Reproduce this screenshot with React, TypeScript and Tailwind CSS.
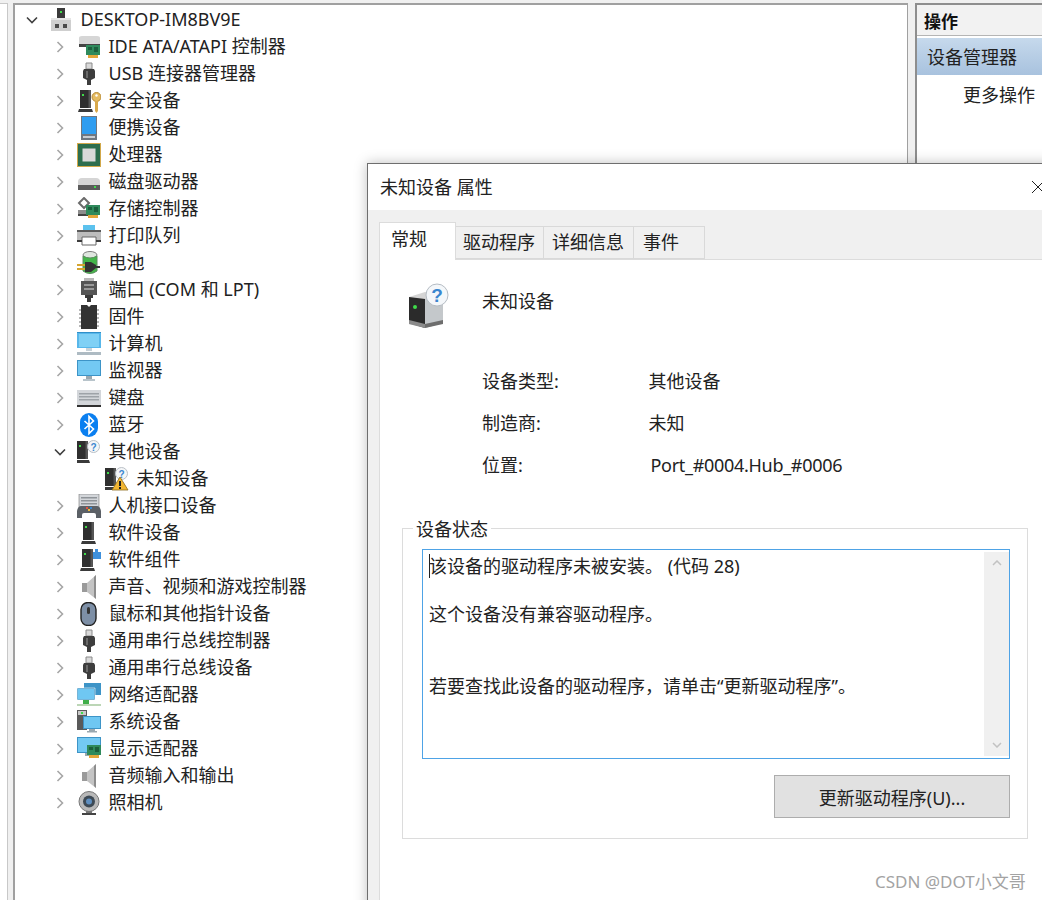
import React from "react";

const Led = ({ x, y }: { x: number; y: number }) => <rect x={x} y={y} width="2" height="2" fill="#3fdc4a" />;

const Tower = ({ x = 0 }: { x?: number }) => (
  <g transform={`translate(${x} 0)`}>
    <path d="M3 1h11v18H3z" fill="#2f2f2f" />
    <path d="M11.500 1H14v18h-2.500z" fill="#555" />
    <path d="M2 20h13l1 3H1z" fill="#3a3a3a" />
    <Led x={5} y={5} />
  </g>
);

const Bubble = () => (
  <g>
    <circle cx="16.500" cy="6.500" r="6" fill="#f4f6f8" stroke="#b9bfc6" />
    <text x="16.500" y="10.500" textAnchor="middle" fontSize="10" fontWeight="700" fill="#3a86cf" fontFamily="Liberation Sans, sans-serif">?</text>
  </g>
);

const Usb = () => (
  <svg viewBox="0 0 24 24" className="w-6 h-6">
    <path d="M9 1h6v6H9z" fill="#d9d9d9" stroke="#8a8a8a" />
    <path d="M7 7h10l1 2v7l-4 2v5h-4v-5l-4-2V9z" fill="#3d3d3d" />
    <path d="M9 9h2v7H9z" fill="#6a6a6a" />
  </svg>
);

const Speaker = () => (
  <svg viewBox="0 0 24 24" className="w-6 h-6">
    <path d="M5 8h5v9H5z" fill="#9a9a9a" />
    <path d="M10 8l9-8v24l-9-7z" fill="#c4c4c4" />
    <path d="M17 2l2-2v24l-2-2z" fill="#8d8d8d" />
  </svg>
);

const Card = ({ x = 0, y = 0 }: { x?: number; y?: number }) => (
  <g transform={`translate(${x} ${y})`}>
    <path d="M0 0h14v10H0z" fill="#2f8a5c" />
    <path d="M2 2h4v3H2zM8 2h4v5H8z" fill="#1c5f3d" />
    <path d="M2 10h10v3H2z" fill="#e3a63a" />
  </g>
);

const icons: Record<string, React.ReactNode> = {
  root: (
    <svg viewBox="0 0 24 24" className="w-6 h-6">
      <path d="M8 0h8v10H8z" fill="#3a3a3a" />
      <Led x={11} y={3} />
      <path d="M2 10h20v13H2z" fill="#cfcfcf" />
      <path d="M2 10h20v2H2z" fill="#e6e6e6" />
      <path d="M6 16h4v4H6zM14 16h4v4h-4z" fill="#4a4a4a" />
    </svg>
  ),
  ide: (
    <svg viewBox="0 0 24 24" className="w-6 h-6">
      <path d="M2 3q0-2 3-2h15q3 0 3 2v6H2z" fill="#d6d6d6" />
      <path d="M2 9h21v3H2z" fill="#444" />
      <Card x={9} y={10} />
    </svg>
  ),
  usb: <Usb />,
  security: (
    <svg viewBox="0 0 24 24" className="w-6 h-6">
      <Tower />
      <circle cx="19.500" cy="8" r="4.500" fill="#e4bb62" stroke="#b98b35" />
      <path d="M18 12h3v10l-1.500 2-1.500-2z" fill="#d9a94b" />
      <circle cx="19.500" cy="6.500" r="1.200" fill="#fff" />
    </svg>
  ),
  portable: (
    <svg viewBox="0 0 24 24" className="w-6 h-6">
      <path d="M4 0h16v24H4z" fill="#6f7780" />
      <path d="M5 1h14v17H5z" fill="#2f9df0" />
      <path d="M6 20h12v2H6z" fill="#c7ccd1" />
    </svg>
  ),
  cpu: (
    <svg viewBox="0 0 24 24" className="w-6 h-6">
      <path d="M0 0h24v24H0z" fill="#d1a84a" />
      <path d="M1 1h22v22H1z" fill="#2d6e4e" />
      <path d="M5.500 5.500h13v13h-13z" fill="#dadada" />
    </svg>
  ),
  disk: (
    <svg viewBox="0 0 24 24" className="w-6 h-6">
      <path d="M1 12q0-4 4-4h14q4 0 4 4v3H1z" fill="#d5d5d5" />
      <path d="M1 15h22v5H1z" fill="#5b5b5b" />
      <Led x={17} y={16} />
    </svg>
  ),
  storage: (
    <svg viewBox="0 0 24 24" className="w-6 h-6">
      <path d="M7 1l5 5-5 5-5-5z" fill="none" stroke="#6b6b6b" strokeWidth="2" />
      <path d="M1 13h15v5H1z" fill="#8d8d8d" />
      <path d="M1 17h18v2H1z" fill="#444" />
      <Card x={9} y={8} />
    </svg>
  ),
  printer: (
    <svg viewBox="0 0 24 24" className="w-6 h-6">
      <path d="M6 1h12v6H6z" fill="#5cc2ee" />
      <path d="M0 6h24v12H0z" fill="#bdbdbd" />
      <path d="M0 6h24v2H0z" fill="#5a5a5a" />
      <path d="M5 13h14v8H5z" fill="#fff" stroke="#666" />
      <path d="M0 16h5v2H0zM19 16h5v2h-5z" fill="#3d3d3d" />
    </svg>
  ),
  battery: (
    <svg viewBox="0 0 24 24" className="w-6 h-6">
      <ellipse cx="13" cy="4" rx="7" ry="3.500" fill="#dfe6df" stroke="#7c7c7c" />
      <path d="M6 5q7 4 14 0v15q-7 5-14 0z" fill="#43b649" stroke="#5c8c5f" />
      <path d="M0 13h9v2H0zM0 17h9v2H0z" fill="#d5a531" />
      <path d="M8 11h6l5 3v3l-5 4H8z" fill="#333" />
      <path d="M18 15h5v2h-5z" fill="#333" />
    </svg>
  ),
  port: (
    <svg viewBox="0 0 24 24" className="w-6 h-6">
      <path d="M4 3h16v14H4z" fill="#555" />
      <path d="M7 0h10v3H7z" fill="#b8b8b8" />
      <path d="M7 6h10v2H7zM7 10h10v2H7z" fill="#999" />
      <path d="M8 17h8v3h-2v4h-4v-4H8z" fill="#3a3a3a" />
    </svg>
  ),
  firmware: (
    <svg viewBox="0 0 24 24" className="w-6 h-6">
      <path d="M2 4h20v2H2zM2 8h20v2H2zM2 12h20v2H2zM2 16h20v2H2zM2 20h20v2H2z" fill="#b8b8b8" />
      <path d="M4 0h6l2 2 2-2h6v24H4z" fill="#333" />
    </svg>
  ),
  computer: (
    <svg viewBox="0 0 24 24" className="w-6 h-6">
      <path d="M0 0h24v16H0z" fill="#58b7ea" />
      <path d="M0 0h24v1H0z" fill="#2f8fc9" />
      <path d="M2 2h20v13H2z" fill="#7fd0f5" />
      <path d="M9 16h6v3H9z" fill="#c8d2d8" />
      <path d="M0 20h24v3H0z" fill="#aebbc3" />
    </svg>
  ),
  monitor: (
    <svg viewBox="0 0 24 24" className="w-6 h-6">
      <path d="M0 1h24v16H0z" fill="#3d94c7" />
      <path d="M1 2h22v14H1z" fill="#73c9f3" />
      <path d="M9 17h6v3H9z" fill="#9aa8b0" />
      <path d="M6 20h12v2H6z" fill="#b8c4cb" />
    </svg>
  ),
  keyboard: (
    <svg viewBox="0 0 24 24" className="w-6 h-6">
      <path d="M0 4h24v16H0z" fill="#d3d6da" />
      <path d="M2 7h20v1.500H2zM2 10h20v1.500H2zM2 13h20v1.500H2z" fill="#9ea3a8" />
      <path d="M0 19h24v2H0z" fill="#303030" />
    </svg>
  ),
  bluetooth: (
    <svg viewBox="0 0 24 24" className="w-6 h-6">
      <rect x="3" y="0" width="18" height="24" rx="9" fill="#0a7ff0" />
      <path d="M7.500 8l9 8-4.500 4.500v-17L16.500 8l-9 8" fill="none" stroke="#fff" strokeWidth="1.600" />
    </svg>
  ),
  other: (
    <svg viewBox="0 0 24 24" className="w-6 h-6">
      <Tower x={-3} />
      <Bubble />
    </svg>
  ),
  unknown: (
    <svg viewBox="0 0 24 24" className="w-6 h-6">
      <Tower x={-3} />
      <Bubble />
      <path d="M15 10l8 13H7z" fill="#f2b632" stroke="#8a6a1c" strokeWidth=".8" />
      <path d="M14 14h2v5h-2zM14 20h2v2h-2z" fill="#222" />
    </svg>
  ),
  hid: (
    <svg viewBox="0 0 24 24" className="w-6 h-6">
      <path d="M2 0h20v14H2z" fill="#d3d6da" stroke="#777" strokeWidth=".6" />
      <path d="M4 3h16v1.500H4zM4 6h16v1.500H4zM4 9h16v1.500H4z" fill="#8f9499" />
      <path d="M4 12h16q3 0 4 5v7h-5v-3q0-2-2-2H7q-2 0-2 2v3H0v-7q1-5 4-5z" fill="#5b6066" />
      <path d="M9 13h2v2H9z" fill="#e4533f" />
      <path d="M13 13h2v2h-2z" fill="#3a86cf" />
      <path d="M11 15h2v2h-2z" fill="#edbb3a" />
    </svg>
  ),
  softdev: (
    <svg viewBox="0 0 24 24" className="w-6 h-6">
      <Tower x={3} />
    </svg>
  ),
  softcomp: (
    <svg viewBox="0 0 24 24" className="w-6 h-6">
      <Tower x={2} />
      <path d="M16 4h2V1h3v3h3v7h-8z" fill="#3e90dc" />
    </svg>
  ),
  sound: <Speaker />,
  mouse: (
    <svg viewBox="0 0 24 24" className="w-6 h-6">
      <rect x="4" y="0.500" width="15" height="23" rx="7" fill="#7d8fa6" stroke="#222" strokeWidth="1.400" />
      <rect x="10" y="5" width="3" height="7" rx="1.500" fill="#333" />
    </svg>
  ),
  network: (
    <svg viewBox="0 0 24 24" className="w-6 h-6">
      <path d="M7 0h17v12H7z" fill="#3d94c7" />
      <path d="M0 5h18v12H0z" fill="#3d94c7" stroke="#fff" strokeWidth=".6" />
      <path d="M1 6h16v10H1z" fill="#6fc7f2" />
      <path d="M6 17h6v4H6z" fill="#3fae48" />
      <path d="M0 21h24v2H0z" fill="#bcd6b6" />
    </svg>
  ),
  system: (
    <svg viewBox="0 0 24 24" className="w-6 h-6">
      <path d="M0 0h10v20H0z" fill="#5a5a5a" />
      <path d="M1 1h8v4H1z" fill="#c9c9c9" />
      <Led x={4} y={2} />
      <path d="M6 6h18v13H6z" fill="#3d94c7" />
      <path d="M7 7h16v11H7z" fill="#6fc7f2" />
      <path d="M12 19h6v2h-6zM10 21h10v1.500H10z" fill="#9aa8b0" />
    </svg>
  ),
  display: (
    <svg viewBox="0 0 24 24" className="w-6 h-6">
      <path d="M0 0h24v16H0z" fill="#3d94c7" />
      <path d="M1 1h22v14H1z" fill="#73c9f3" />
      <path d="M8 16h6v3H8z" fill="#9aa8b0" />
      <Card x={10} y={8} />
    </svg>
  ),
  camera: (
    <svg viewBox="0 0 24 24" className="w-6 h-6">
      <circle cx="12" cy="10.500" r="10" fill="#b9b9b9" stroke="#777" />
      <circle cx="12" cy="10.500" r="6" fill="#3e4a55" />
      <circle cx="12" cy="10.500" r="3" fill="#5f8fc0" />
      <path d="M9 20h6v2H9z" fill="#777" />
      <path d="M5 22h14v2H5z" fill="#444" />
    </svg>
  ),
};

type Row = { label: string; icon: string; depth: number; open?: boolean; leaf?: boolean };

const rows: Row[] = [
  { label: "DESKTOP-IM8BV9E", icon: "root", depth: 0, open: true },
  { label: "IDE ATA/ATAPI 控制器", icon: "ide", depth: 1 },
  { label: "USB 连接器管理器", icon: "usb", depth: 1 },
  { label: "安全设备", icon: "security", depth: 1 },
  { label: "便携设备", icon: "portable", depth: 1 },
  { label: "处理器", icon: "cpu", depth: 1 },
  { label: "磁盘驱动器", icon: "disk", depth: 1 },
  { label: "存储控制器", icon: "storage", depth: 1 },
  { label: "打印队列", icon: "printer", depth: 1 },
  { label: "电池", icon: "battery", depth: 1 },
  { label: "端口 (COM 和 LPT)", icon: "port", depth: 1 },
  { label: "固件", icon: "firmware", depth: 1 },
  { label: "计算机", icon: "computer", depth: 1 },
  { label: "监视器", icon: "monitor", depth: 1 },
  { label: "键盘", icon: "keyboard", depth: 1 },
  { label: "蓝牙", icon: "bluetooth", depth: 1 },
  { label: "其他设备", icon: "other", depth: 1, open: true },
  { label: "未知设备", icon: "unknown", depth: 2, leaf: true },
  { label: "人机接口设备", icon: "hid", depth: 1 },
  { label: "软件设备", icon: "softdev", depth: 1 },
  { label: "软件组件", icon: "softcomp", depth: 1 },
  { label: "声音、视频和游戏控制器", icon: "sound", depth: 1 },
  { label: "鼠标和其他指针设备", icon: "mouse", depth: 1 },
  { label: "通用串行总线控制器", icon: "usb", depth: 1 },
  { label: "通用串行总线设备", icon: "usb", depth: 1 },
  { label: "网络适配器", icon: "network", depth: 1 },
  { label: "系统设备", icon: "system", depth: 1 },
  { label: "显示适配器", icon: "display", depth: 1 },
  { label: "音频输入和输出", icon: "sound", depth: 1 },
  { label: "照相机", icon: "camera", depth: 1 },
];

const depthPad = ["pl-[10px]", "pl-[38px]", "pl-[66px]"];

const Chevron = ({ open }: { open?: boolean }) => (
  <svg viewBox="0 0 14 14" className="w-[14px] h-[14px]">
    {open ? (
      <path d="M2 4.500l5 5 5-5" fill="none" stroke="#404040" strokeWidth="1.600" />
    ) : (
      <path d="M4.500 2l5 5-5 5" fill="none" stroke="#a6a6a6" strokeWidth="1.600" />
    )}
  </svg>
);

const TreeRow = ({ row }: { row: Row }) => (
  <div className={`flex items-center h-[27px] ${depthPad[row.depth]}`}>
    <div className="w-[14px] h-[14px] shrink-0">{!row.leaf && <Chevron open={row.open} />}</div>
    <div className="ml-[10px] w-6 h-6 shrink-0">{icons[row.icon]}</div>
    <span className="ml-[7.5px] text-[18px] leading-[27px] text-[#222] whitespace-nowrap">{row.label}</span>
  </div>
);

const Info = ({ label, value, valueClass }: { label: string; value: string; valueClass: string }) => (
  <div className="flex items-center h-[42px]">
    <span className="w-[166.500px]">{label}</span>
    <span className={valueClass}>{value}</span>
  </div>
);

const Tab = ({ label, className }: { label: string; className: string }) => (
  <div className={`flex items-center h-[33px] bg-[#f0f0f0] border border-[#d9d9d9] border-l-0 ${className}`}>{label}</div>
);

export default function App() {
  return (
    <div className="relative flex w-full h-[900px] overflow-hidden bg-[#f0f0f0] [font-family:'Noto_Sans','Noto_Sans_CJK_SC',sans-serif]">
      <div className="w-[8px] shrink-0 mt-[3px] bg-white border-t border-r border-[#c8c8c8]" />
      <div className="w-[5px] shrink-0" />
      <div className="w-[895px] shrink-0 mt-[3px] border-l-2 border-t-2 border-r border-[#a0a0a0] bg-white">
        <div className="pt-[1px]">
          {rows.map((r) => (
            <TreeRow key={r.label + r.depth + r.icon} row={r} />
          ))}
        </div>
      </div>
      <div className="w-[7px] shrink-0" />
      <div className="flex-1 mt-[3px] border-l-2 border-t-2 border-[#8e8e8e] bg-white">
        <div className="flex items-center h-[31px] pl-[7px] pt-[3px] bg-[#f2f2f2] border-b border-[#b5b5b5] text-[17px] font-bold text-[#111]">操作</div>
        <div className="flex items-center mt-[2px] h-[37px] pl-[10px] pt-[2px] bg-gradient-to-b from-[#c6d9ec] to-[#a8c2de] text-[18px] text-[#222]">设备管理器</div>
        <div className="flex items-center mt-[1px] h-[38px] pl-[46px] text-[18px] text-[#222]">更多操作</div>
      </div>

      <div className="absolute left-[367px] top-[163px] w-[720px] h-[800px] flex flex-col bg-[#f0f0f0] border border-[#6e6e6e] shadow-[0_0_12px_rgba(0,0,0,0.25)] text-[18px] text-[#222]">
        <div className="flex items-center justify-between h-[46px] shrink-0 bg-white pl-3">
          <span>未知设备 属性</span>
          <svg viewBox="0 0 14 14" className="w-[14px] h-[14px] mr-[41px] shrink-0">
            <path d="M1 1l12 12M13 1L1 13" stroke="#222" strokeWidth="1" />
          </svg>
        </div>
        <div className="flex-1 flex flex-col pl-[11px] pt-3">
          <div className="relative z-10 flex items-end h-[38px]">
            <div className="flex items-start pt-[3px] pl-[11px] w-[77px] h-[38px] bg-white border border-b-0 border-[#dcdcdc]">常规</div>
            <div className="flex mb-[1px]">
              <Tab label="驱动程序" className="w-[88px] pl-[7px]" />
              <Tab label="详细信息" className="w-[90px] pl-[8px]" />
              <Tab label="事件" className="w-[71px] pl-[9px]" />
            </div>
          </div>
          <div className="flex-1 -mt-[1px] bg-white border-t border-l border-[#dcdcdc] pl-[22px]">
            <div className="flex items-center h-[62px] mt-[10px]">
              <svg viewBox="0 0 44 48" className="self-start mt-[13px] ml-[3px] w-[44px] h-[48px] shrink-0">
                <path d="M4 14l16-5 18 3v28l-18 5-16-4z" fill="#d5d5d5" />
                <path d="M4 14l16 2v29L4 40z" fill="#2b2b2b" />
                <path d="M20 16l18-4v28l-18 5z" fill="#c4c8cb" />
                <path d="M4 37l16 4v4L4 41z" fill="#8b8b8b" />
                <path d="M20 41l18-4v4l-18 4z" fill="#6d6d6d" />
                <circle cx="10" cy="24" r="2" fill="#3fdc4a" />
                <circle cx="32" cy="12" r="11" fill="#f4f7fa" stroke="#b5bcc3" />
                <text x="32" y="19" textAnchor="middle" fontSize="19" fontWeight="700" fill="#3a86cf" fontFamily="Liberation Sans, sans-serif">?</text>
              </svg>
              <span className="ml-[33px]">未知设备</span>
            </div>
            <div className="mt-[28px] ml-[80px]">
              <Info label="设备类型:" value="其他设备" valueClass="" />
              <Info label="制造商:" value="未知" valueClass="" />
              <Info label="位置:" value="Port_#0004.Hub_#0006" valueClass="ml-[2px] tracking-[-0.3px]" />
            </div>
            <div className="relative mt-[42px] w-[626px] h-[311px] border border-[#dcdcdc] pl-[19px] pt-[20px]">
              <span className="absolute left-[10px] -top-[13px] px-[3px] bg-white">设备状态</span>
              <div className="flex w-[588px] h-[210px] border border-[#4ea3e6] p-[2px] pr-0">
                <div className="flex-1 pl-[4px] pt-[2px]">
                  <div className="relative h-[24px] flex items-center whitespace-nowrap">
                    <span className="absolute left-0 top-0 w-[1px] h-[24px] bg-[#222]" />
                    该设备的驱动程序未被安装。 (代码 28)
                  </div>
                  <div className="mt-[24px] h-[24px] flex items-center">这个设备没有兼容驱动程序。</div>
                  <div className="mt-[48px] h-[24px] flex items-center">若要查找此设备的驱动程序，请单击“更新驱动程序”。</div>
                </div>
                <div className="flex flex-col justify-between items-center w-[25px] h-[204px] py-[8px] bg-[#f0f0f0]">
                  <svg viewBox="0 0 10 6" className="w-[10px] h-[6px]"><path d="M1 5l4-4 4 4" fill="none" stroke="#c2c2c2" strokeWidth="1.500" /></svg>
                  <svg viewBox="0 0 10 6" className="w-[10px] h-[6px]"><path d="M1 1l4 4 4-4" fill="none" stroke="#c2c2c2" strokeWidth="1.500" /></svg>
                </div>
              </div>
              <button className="block mt-[16px] ml-[352px] w-[236px] h-[43px] pt-[3px] bg-[#e1e1e1] border border-[#adadad] text-[18px] text-[#222]">更新驱动程序(U)...</button>
            </div>
          </div>
        </div>
      </div>

      <div className="absolute left-[875px] top-[871px] text-[17px] leading-[22px] text-[#a3a3a3]">CSDN @DOT小文哥</div>
    </div>
  );
}
